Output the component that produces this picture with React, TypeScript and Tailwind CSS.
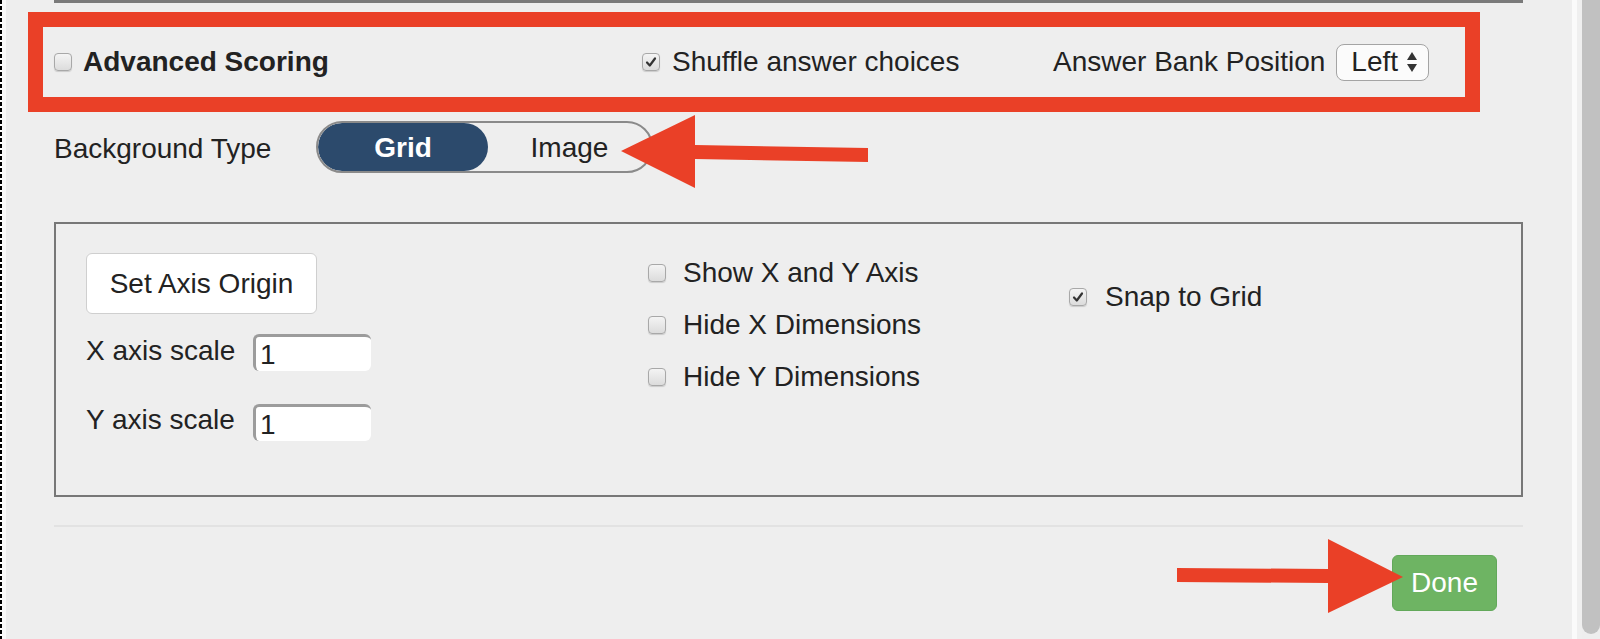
import React from 'react';

// Caixa de seleção no estilo do macOS
const Caixa: React.FC<{ marcada?: boolean }> = ({ marcada = false }) => (
  <span className="flex h-[18px] w-[18px] shrink-0 items-center justify-center rounded-[4px] border border-[#a8a8a8] bg-gradient-to-b from-[#f4f4f4] to-[#dcdcdc] shadow-[0_1px_1px_rgba(0,0,0,0.15)]">
    {marcada && (
      <svg viewBox="0 0 12 12" className="h-[12px] w-[12px]">
        <path d="M2 6.5 L4.8 9.5 L10 2.5" fill="none" stroke="#333" strokeWidth="2.2" strokeLinecap="round" strokeLinejoin="round" />
      </svg>
    )}
  </span>
);

// Campo de texto com borda interna
const Campo: React.FC<{ valor: string }> = ({ valor }) => (
  <div className="flex h-[37px] w-[118px] items-center rounded-[6px] border-l-[3px] border-t-[3px] border-[#9c9c9c] bg-white pl-[4px] pt-[2px]">
    {valor}
  </div>
);

export default function App() {
  return (
    <div className="relative flex h-[639px] w-full overflow-hidden bg-[#eeeeee] font-['Liberation_Sans',Arial,sans-serif] text-[28px] leading-none text-[#222]">
      {/* Borda tracejada da esquerda */}
      <div className="w-[2px] shrink-0 bg-[repeating-linear-gradient(to_bottom,#000_0px,#000_4px,#fff_4px,#fff_6px)]" />
      <div className="w-[4px] shrink-0 bg-[#fafafa]" />

      {/* Conteúdo principal */}
      <main className="w-[1566px] shrink-0 pl-[48px] pr-[49px]">
        <div className="h-[3px] bg-[#7a7a7a]" />

        {/* Linha de opções */}
        <div className="mt-[39px] flex h-[40px] items-center">
          <div className="flex w-[588px] items-center">
            <Caixa />
            <span className="ml-[11px] font-bold">Advanced Scoring</span>
          </div>
          <div className="flex w-[411px] items-center">
            <Caixa marcada />
            <span className="ml-[12px]">Shuffle answer choices</span>
          </div>
          <span>Answer Bank Position</span>
          <div className="ml-[11px] flex h-[37px] w-[93px] items-center rounded-[8px] border border-[#a4a4a4] bg-[#fbfbfb] pl-[14px]">
            <span>Left</span>
            <svg viewBox="0 0 12 22" className="ml-[8px] h-[22px] w-[12px]">
              <path d="M6 1 L11 9 L1 9 Z" fill="#333" />
              <path d="M6 21 L11 13 L1 13 Z" fill="#333" />
            </svg>
          </div>
        </div>

        {/* Tipo de fundo */}
        <div className="mt-[39px] flex h-[52px] items-center">
          <span className="w-[262px] pt-[4px]">Background Type</span>
          <div className="flex h-[52px] w-[337px] overflow-hidden rounded-full border-2 border-[#8a8a8a]">
            <div className="flex w-[170px] items-center justify-center rounded-full bg-[#2c4a6c] pt-[2px] font-bold text-white">Grid</div>
            <div className="flex flex-1 items-center justify-center pt-[2px]">Image</div>
          </div>
        </div>

        {/* Painel da grade */}
        <div className="mt-[49px] flex h-[275px] border-2 border-[#777] pl-[30px]">
          <div className="w-[562px] pt-[29px]">
            <button className="h-[61px] w-[231px] rounded-[6px] border border-[#cfcfcf] bg-white">Set Axis Origin</button>
            <div className="mt-[20px] flex h-[37px] items-center">
              <span className="w-[167px] pb-[4px]">X axis scale</span>
              <Campo valor="1" />
            </div>
            <div className="mt-[32px] flex h-[38px] items-center">
              <span className="w-[167px] pb-[4px]">Y axis scale</span>
              <Campo valor="1" />
            </div>
          </div>
          <div className="flex w-[421px] flex-col gap-[12px] pt-[29px]">
            {['Show X and Y Axis', 'Hide X Dimensions', 'Hide Y Dimensions'].map((t) => (
              <div key={t} className="flex h-[40px] items-center">
                <Caixa />
                <span className="ml-[17px]">{t}</span>
              </div>
            ))}
          </div>
          <div className="pt-[53px]">
            <div className="flex h-[40px] items-center">
              <Caixa marcada />
              <span className="ml-[18px]">Snap to Grid</span>
            </div>
          </div>
        </div>

        <div className="mt-[28px] h-[2px] bg-[#e2e2e2]" />

        <div className="mt-[28px] flex justify-end pr-[26px]">
          <button className="h-[56px] w-[105px] rounded-[6px] border border-[#62a85a] bg-[#6eb463] text-white">Done</button>
        </div>
      </main>

      {/* Barra de rolagem */}
      <div className="w-[5px] shrink-0 bg-[#fafafa]" />
      <div className="w-[5px] shrink-0 bg-[#efefef]" />
      <div className="h-[634px] w-[18px] shrink-0 rounded-b-[9px] bg-[#c1c1c1]" />

      {/* Anotações em vermelho */}
      <div className="pointer-events-none absolute left-[28px] top-[12px] h-[100px] w-[1452px] border-[15px] border-[#ea4027]" />
      <svg className="pointer-events-none absolute left-0 top-0" width="1600" height="639">
        <polygon points="868,148 695,145 695,115 621,151 695,188 695,159 868,162" fill="#ea4027" />
        <polygon points="1177,568 1328,569 1328,539 1403,577 1328,613 1328,583 1177,582" fill="#ea4027" />
      </svg>
    </div>
  );
}
